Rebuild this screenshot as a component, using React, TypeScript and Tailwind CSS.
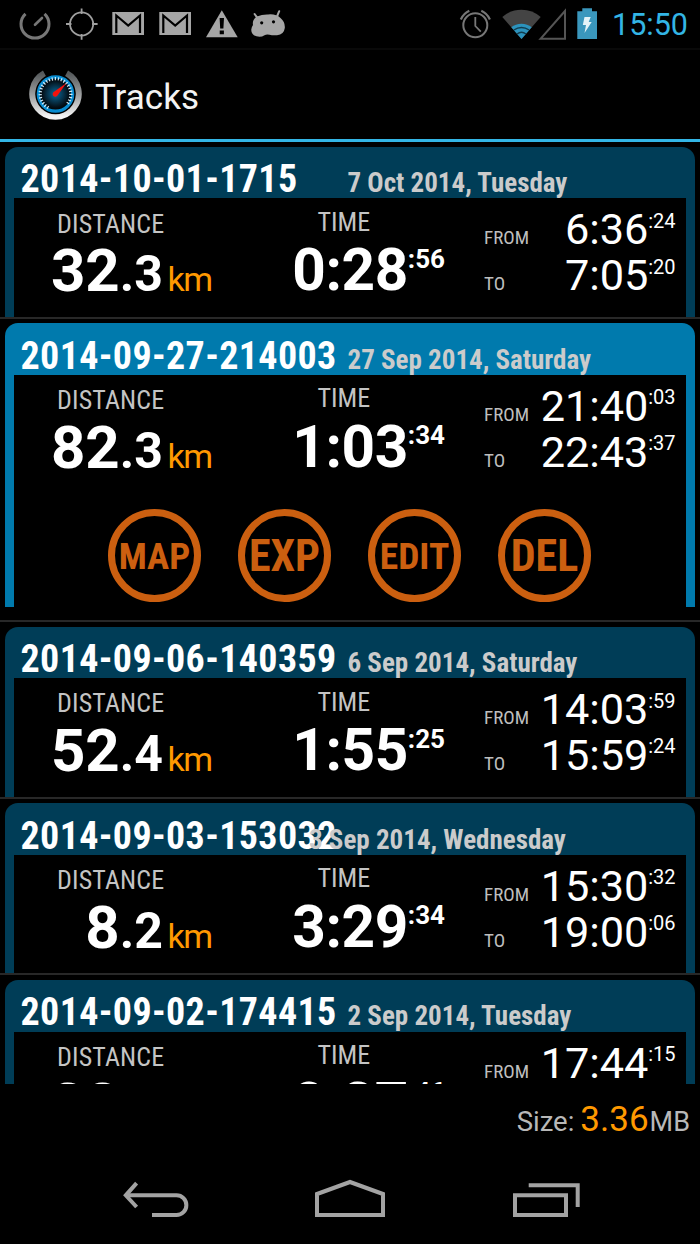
import React from 'react';
import clsx from 'clsx';

interface Track {
  name: string;
  date: string;
  km: [string, string];
  time: [string, string];
  from: [string, string];
  to: [string, string];
  active?: boolean;
  overlap?: boolean;
}

const tracks: Track[] = [
  {
    name: '2014-10-01-1715',
    date: '7 Oct 2014, Tuesday',
    km: ['32', '.3'],
    time: ['0:28', ':56'],
    from: ['6:36', ':24'],
    to: ['7:05', ':20'],
  },
  {
    name: '2014-09-27-214003',
    date: '27 Sep 2014, Saturday',
    km: ['82', '.3'],
    time: ['1:03', ':34'],
    from: ['21:40', ':03'],
    to: ['22:43', ':37'],
    active: true,
  },
  {
    name: '2014-09-06-140359',
    date: '6 Sep 2014, Saturday',
    km: ['52', '.4'],
    time: ['1:55', ':25'],
    from: ['14:03', ':59'],
    to: ['15:59', ':24'],
  },
  {
    name: '2014-09-03-153032',
    date: '3 Sep 2014, Wednesday',
    km: ['8', '.2'],
    time: ['3:29', ':34'],
    from: ['15:30', ':32'],
    to: ['19:00', ':06'],
    overlap: true,
  },
  {
    name: '2014-09-02-174415',
    date: '2 Sep 2014, Tuesday',
    km: ['38', '.2'],
    time: ['0:37', ':46'],
    from: ['17:44', ':15'],
    to: ['18:22', ':01'],
  },
];

const actions = [
  { label: 'MAP', size: 'text-[37px]' },
  { label: 'EXP', size: 'text-[44px]' },
  { label: 'EDIT', size: 'text-[37.5px]' },
  { label: 'DEL', size: 'text-[44px]' },
];

const dialTicks = Array.from({ length: 25 }, (_, i) => -150 + i * 11.5);

function GmailIcon() {
  return (
    <svg className="h-12 w-[33px]" viewBox="112 0 33 48" fill="none">
      <path d="M112.3 12H144V35H112.3Z" fill="#a6a6a6" />
      <path d="M116.3 33V15.5L128.2 25.5L140 15.5V33" stroke="#000" strokeWidth="2.2" />
    </svg>
  );
}

function StatusBar() {
  return (
    <div className="flex h-[50px] shrink-0 items-start justify-between border-b-2 border-[#090909] pl-[18px] pr-[12px]">
      <div className="flex">
        <svg className="mr-[13px] h-12 w-[34px]" viewBox="18 0 34 48" fill="none" stroke="#777">
          <path d="M25.5 13.8A14 14 0 1 0 44.5 13.8" strokeWidth="3" />
          <path d="M35 24.8L42 18" strokeWidth="2.6" strokeLinecap="round" />
        </svg>
        <svg className="mr-[14px] h-12 w-[33px]" viewBox="65 0 33 48" fill="none" stroke="#a0a0a0" strokeWidth="1.8">
          <circle cx="81.6" cy="24" r="11.6" />
          <path d="M81.6 8.5V14M81.6 34V39.7M66 24H71.5M92 24H97.6" />
        </svg>
        <div className="mr-[14px] flex gap-[14px]">
          <GmailIcon />
          <GmailIcon />
        </div>
        <svg className="mr-[11px] h-12 w-[33px]" viewBox="206 0 33 48">
          <path d="M221.8 10.2L237.7 37.2H206Z" fill="#a6a6a6" strokeLinejoin="round" />
          <path d="M219.6 18H224L223.4 28.5H220.2ZM219.7 30.5H223.9V34.2H219.7Z" fill="#000" />
        </svg>
        <svg className="h-12 w-[36px]" viewBox="250 0 36 48">
          <path d="M257 16.5Q262 14.2 268 14.4Q276 13.6 280.5 18Q285.3 22 284.8 28Q284 34.5 277 35.2Q273 35.6 269.5 34.8Q266.5 34.2 264.5 35.2Q261 37.5 256.5 36.3Q251 34.7 251.3 29.5Q251.5 27 253 25Q252 19.5 257 16.5Z" fill="#a6a6a6" />
          <path d="M254.6 14L257.8 18.4M279.2 11.2L276.8 17" stroke="#a6a6a6" strokeWidth="2" strokeLinecap="round" />
          <circle cx="261.7" cy="22.8" r="1.6" />
          <circle cx="273.5" cy="21.8" r="1.6" />
        </svg>
      </div>
      <div className="flex">
        <svg className="mr-[10px] h-12 w-[33px]" viewBox="459 0 33 48" fill="none" stroke="#777" strokeWidth="2">
          <circle cx="475.3" cy="25.3" r="12" />
          <path d="M475.3 17V26L480.8 31.7" strokeWidth="1.8" />
          <path d="M460.8 19.5Q463.5 13.5 469.3 10.8M481.3 10.8Q487.2 13.5 489.9 19.5" strokeWidth="2.2" />
        </svg>
        <svg className="mr-[10px] h-12 w-[65px]" viewBox="502 0 65 48">
          <path d="M521.5 39L502.3 17Q510.5 9.7 521.5 9.7Q532.5 9.7 540.7 17Z" fill="#444" />
          <path d="M521.5 39L511.3 27.3Q515.5 23.7 521.5 23.7Q527.5 23.7 531.7 27.3Z" fill="#2c93bd" />
          <path d="M513.8 30Q521.5 24.8 529.2 30M517 34Q521.5 30.6 526 34" fill="none" stroke="#123c4e" strokeWidth="1.5" />
          <path d="M540.5 38.8L565 11V38.8Z" fill="none" stroke="#555" strokeWidth="2" />
        </svg>
        <svg className="mr-[14px] h-12 w-[21px]" viewBox="577 0 21 48">
          <path d="M582.3 8.2H592V11.2H597V39H577.3V11.2H582.3Z" fill="#3a97bd" />
          <path d="M584.5 17H590.7L588.7 22H591.7L584.5 33L586 25H582.8Z" fill="#e4f3f8" />
        </svg>
        <span className="pt-[10px] text-[30.5px] leading-none text-[#33b5e5]">15:50</span>
      </div>
    </div>
  );
}

function ActionBar() {
  return (
    <div className="flex h-[92px] shrink-0 items-start border-b-[3px] border-[#33b5e5] pl-[28px]">
      <svg className="mt-[18px] h-[54px] w-[56px]" viewBox="28 68 56 54">
        <defs>
          <linearGradient id="ring" x1="0" y1="0" x2="0" y2="1">
            <stop offset="0" stopColor="#55595b" />
            <stop offset="0.55" stopColor="#a5a7a8" />
            <stop offset="1" stopColor="#f4f4f4" />
          </linearGradient>
          <radialGradient id="dial">
            <stop offset="0" stopColor="#0b6a9c" />
            <stop offset="0.75" stopColor="#04121b" />
            <stop offset="1" stopColor="#000" />
          </radialGradient>
        </defs>
        <path d="M44.5 73.3A23 23 0 1 0 66.5 73.3" fill="none" stroke="url(#ring)" strokeWidth="6.5" />
        <circle cx="55.5" cy="94" r="20.2" fill="#000" />
        <circle cx="55.5" cy="94" r="17.2" fill="url(#dial)" stroke="#078bd0" strokeWidth="3.2" />
        {dialTicks.map((angle) => (
          <path key={angle} d="M55.5 77V80.2" stroke="#d5eefa" strokeWidth="1.2" transform={`rotate(${angle} 55.5 94)`} />
        ))}
        <path d="M66.5 83L57.5 95.4A2.6 2.6 0 1 1 54 91.8Z" fill="#f5120c" />
      </svg>
      <h1 className="pl-[11px] pt-[29.5px] text-[35px] leading-none text-[#f3f3f3]">Tracks</h1>
    </div>
  );
}

function Clock({ label, value }: { label: string; value: [string, string] }) {
  return (
    <div className="flex items-baseline justify-between">
      <span className="text-[19px] text-[#bebebe] font-stretch-condensed">{label}</span>
      <div className="flex items-start">
        <span className="text-[43.3px] tracking-[-0.1px]">{value[0]}</span>
        <span className="mt-[2.5px] text-[20px]">{value[1]}</span>
      </div>
    </div>
  );
}

function TrackItem({ track }: { track: Track }) {
  return (
    <div
      className={clsx(
        'shrink-0 border-b-2 border-[#282828] px-[5px] pt-[4.67px] leading-none',
        track.active ? 'h-[303.33px]' : 'h-[176.67px]'
      )}
    >
      <div
        className={clsx(
          'overflow-hidden rounded-t-[13px]',
          track.active ? 'h-[283.33px] bg-[#007aad]' : 'h-[170px] bg-[#003d57]'
        )}
      >
        <div className="flex h-[51.67px] items-baseline whitespace-nowrap pl-[15.5px] pt-[13.5px] font-bold font-stretch-condensed">
          <span className="w-[327px] text-[38px] tracking-[0.36px]">{track.name}</span>
          <span className={clsx('relative text-[27px] text-[#cbcbcb]', track.overlap && '-ml-[38.5px]')}>{track.date}</span>
        </div>

        <div className="mx-[9px] h-full bg-black">
          <div className="flex h-[118px]">
            <div className="w-[199px] pt-[12.2px]">
              <div className="pl-[43px] text-[26px] tracking-[0.15px] text-[#c4c4c4] font-stretch-condensed">DISTANCE</div>
              <div className="mt-[4.8px] flex items-baseline justify-end font-bold">
                <span className="text-[60px]">{track.km[0]}</span>
                <span className="text-[50px]">{track.km[1]}</span>
                <span className="ml-[4.5px] mr-[1.5px] text-[34px] font-normal tracking-[-1.5px] text-[#ff9900]">km</span>
              </div>
            </div>

            <div className="w-[232px] pt-[10.5px]">
              <div className="pl-[104.5px] text-[26px] text-[#c4c4c4] font-stretch-condensed">TIME</div>
              <div className="mt-[6.5px] flex items-start justify-end font-bold">
                <span className="text-[58.5px] tracking-[-0.4px]">{track.time[0]}</span>
                <span className="mt-[4.5px] text-[26px]">{track.time[1]}</span>
              </div>
            </div>

            <div className="flex flex-1 flex-col gap-[2.4px] pl-[39px] pr-[10.5px] pt-[10px]">
              <Clock label="FROM" value={track.from} />
              <Clock label="TO" value={track.to} />
            </div>
          </div>

          {track.active && (
            <div className="mt-[16.5px] flex justify-center gap-[37px] pr-[1px]">
              {actions.map((action) => (
                <button
                  key={action.label}
                  className={clsx(
                    'flex size-[93px] items-center justify-center rounded-full border-[7px] border-[#cb5f10] pt-[1px] font-bold text-[#cb5f10] font-stretch-condensed',
                    action.size
                  )}
                >
                  {action.label}
                </button>
              ))}
            </div>
          )}
        </div>
      </div>
    </div>
  );
}

function NavBar() {
  return (
    <div className="flex h-[96px] shrink-0 items-start pl-[122px] pt-[30px]">
      <svg className="h-10 w-[68px]" viewBox="122 1178 68 40" fill="none" stroke="#a3a3a3" strokeWidth="4">
        <path d="M126 1195.3H176.5A9.8 9.8 0 0 1 176.5 1215H152" />
        <path d="M136.6 1183.2L125.8 1195.3L136.6 1207" />
      </svg>
      <svg className="ml-[124px] h-10 w-[72px]" viewBox="314 1178 72 40" fill="none" stroke="#a3a3a3" strokeWidth="4">
        <path d="M317 1215V1194L350 1182L383 1194V1215Z" />
      </svg>
      <svg className="ml-[126px] h-10 w-[70px]" viewBox="512 1178 70 40" fill="none" stroke="#a3a3a3" strokeWidth="4">
        <path d="M515 1195.3H566V1215H515Z" />
        <path d="M528.7 1185.3H577.7V1207" />
      </svg>
    </div>
  );
}

export default function App() {
  return (
    <div className="flex h-[1244px] w-[700px] flex-col overflow-hidden bg-black font-['Roboto',sans-serif] text-white">
      <StatusBar />
      <ActionBar />
      <div className="flex h-[942px] shrink-0 flex-col overflow-hidden">
        {tracks.map((track) => (
          <TrackItem key={track.name} track={track} />
        ))}
      </div>
      <div className="flex h-[64px] shrink-0 items-baseline justify-end pr-[10px] pt-[18px] text-[27px] leading-none text-[#b8b8b8]">
        <span className="text-[27.5px]">Size:</span>
        <span className="ml-[6px] text-[35px] text-[#ff9900]">3.36</span>
        <span className="ml-[1px]">MB</span>
      </div>
      <NavBar />
    </div>
  );
}
